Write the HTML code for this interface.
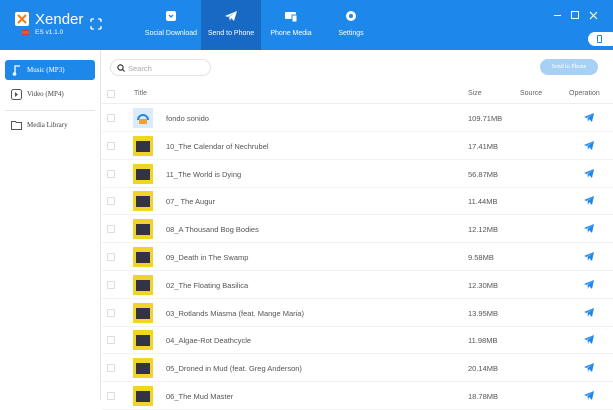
<!DOCTYPE html><html><head><style>
*{margin:0;padding:0;box-sizing:border-box}
body{width:613px;height:400px;overflow:hidden;font-family:"Liberation Sans",sans-serif;background:#fff;position:relative}
.hdr{position:absolute;left:0;top:0;width:613px;height:50px;background:#1e88ea}
.tab{position:absolute;top:0;height:50px;color:#fff;font-size:7px;text-align:center}
.tab .ic{position:absolute;top:10px;left:50%;transform:translateX(-50%)}
.tab span{position:absolute;top:30px;left:0;right:0}
.side{position:absolute;left:0;top:50px;width:101px;height:350px;border-right:1px solid #e3e3e3}
.si{position:absolute;left:5px;width:90px;height:20px;font-family:"Liberation Serif",serif;font-size:7px;color:#444;line-height:20px;padding-left:22px}
.row{position:absolute;left:102px;width:511px;height:28px;border-bottom:1px solid #f2f2f2;font-size:7.5px;color:#555}
.cb{position:absolute;left:5px;top:10px;width:8px;height:8px;border:1px solid #ddd;border-radius:1px}
.th{position:absolute;left:31px;top:4px;width:20px;height:20px;background:#f2d32a}
.t{position:absolute;left:64px;top:10px}
.s{position:absolute;left:366px;top:10px}
.op{position:absolute;left:482px;top:9px}
</style></head><body>
<div class="hdr">
 <div style="position:absolute;left:15px;top:12px;width:14px;height:14px;background:#fff;border-radius:2px"><svg width="14" height="14"><path d="M3 3L7 7L11 3M3 11L7 7L11 11" stroke="#f07a1a" stroke-width="2" fill="none"/></svg></div>
 <div style="position:absolute;left:35px;top:11px;color:#fff;font-size:15px">Xender</div>
 <div style="position:absolute;left:22px;top:30px;width:7px;height:5px;background:#c62;border-top:1px solid #d33;border-bottom:1px solid #d33"></div>
 <div style="position:absolute;left:35px;top:29px;color:#fff;font-size:6.5px">ES v1.1.0</div>
 <svg style="position:absolute;left:90px;top:18px" width="12" height="12"><path d="M1 1h3M1 1v3M11 1h-3M11 1v3M1 11h3M1 11v-3M11 11h-3M11 11v-3" stroke="#fff" stroke-width="1.3"/></svg>
 <div class="tab" style="left:141px;width:60px"><svg class="ic" width="12" height="12"><rect x="1" y="1" width="10" height="10" rx="2" fill="#fff"/><path d="M4 5l2 2 2-2" stroke="#1e88ea" stroke-width="1.3" fill="none"/></svg><span>Social Download</span></div>
 <div class="tab" style="left:201px;width:60px;background:#1769c4"><svg class="ic" width="14" height="12"><path d="M1 6L13 1L10 11L7 8L6 11L5 7L12 2L4 7Z" fill="#fff"/></svg><span>Send to Phone</span></div>
 <div class="tab" style="left:261px;width:60px"><svg class="ic" width="14" height="12"><rect x="1" y="2" width="11" height="7" rx="1" fill="#fff"/><rect x="8" y="5" width="5" height="7" fill="#fff" stroke="#1e88ea"/></svg><span>Phone Media</span></div>
 <div class="tab" style="left:321px;width:60px"><svg class="ic" width="12" height="12"><circle cx="6" cy="6" r="5" fill="#fff"/><circle cx="6" cy="6" r="2" fill="#1e88ea"/></svg><span>Settings</span></div>
 <div style="position:absolute;left:554px;top:15px;width:7px;height:1px;background:#fff"></div>
 <div style="position:absolute;left:571px;top:11px;width:8px;height:8px;border:1px solid #fff"></div>
 <svg style="position:absolute;left:589px;top:11px" width="9" height="9"><path d="M1 1l7 7M8 1l-7 7" stroke="#fff" stroke-width="1.2"/></svg>
 <div style="position:absolute;left:588px;top:32px;width:30px;height:14px;background:#fff;border-radius:7px"><div style="position:absolute;left:9px;top:3px;width:5px;height:8px;border:1.5px solid #1e88ea;border-radius:1px"></div></div>
</div>
<div class="side">
 <div class="si" style="top:10px;background:#1e88ea;color:#fff;border-radius:3px">Music (MP3)<svg style="position:absolute;left:7px;top:4px" width="10" height="12"><path d="M3 10V2h5" stroke="#fff" stroke-width="1.3" fill="none"/><circle cx="2.5" cy="10" r="1.8" fill="#fff"/></svg></div>
 <div class="si" style="top:34px">Video (MP4)<svg style="position:absolute;left:6px;top:5px" width="11" height="11"><rect x="0.5" y="0.5" width="10" height="10" rx="2" stroke="#555" fill="none"/><path d="M4 3v5l3-2.5z" fill="#555"/></svg></div>
 <div style="position:absolute;left:5px;top:60px;width:90px;height:1px;background:#e5e5e5"></div>
 <div class="si" style="top:65px">Media Library<svg style="position:absolute;left:6px;top:5px" width="11" height="10"><path d="M0.5 1.5h4l1 1h5v7h-10z" stroke="#555" fill="none"/></svg></div>
</div>
<div style="position:absolute;left:110px;top:59px;width:101px;height:17px;border:1px solid #e3e3e3;border-radius:9px;font-size:7.5px;color:#aaa;padding:4px 0 0 17px">Search<svg style="position:absolute;left:6px;top:4px" width="8" height="8"><circle cx="3.5" cy="3.5" r="2.6" stroke="#333" stroke-width="1.2" fill="none"/><path d="M5.5 5.5l2 2" stroke="#333" stroke-width="1.2"/></svg></div>
<div style="position:absolute;left:540px;top:59px;width:58px;height:16px;background:#a8d0f5;border-radius:8px;color:#fff;font-family:'Liberation Serif',serif;font-size:6px;text-align:center;line-height:16px">Send to Phone</div>
<div class="row" style="top:80px;height:24px;border-bottom:1px solid #eee;font-size:7px;color:#666"><div class="cb" style="top:10px"></div><div style="position:absolute;left:32px;top:10px">Title</div><div style="position:absolute;left:366px;top:10px">Size</div><div style="position:absolute;left:418px;top:10px">Source</div><div style="position:absolute;left:467px;top:10px">Operation</div></div>
<div id="rows"></div>
<script>
var d=[["fondo sonido","109.71MB"],["10_The Calendar of Nechrubel","17.41MB"],["11_The World is Dying","56.87MB"],["07_ The Augur","11.44MB"],["08_A Thousand Bog Bodies","12.12MB"],["09_Death in The Swamp","9.58MB"],["02_The Floating Basilica","12.30MB"],["03_Rotlands Miasma (feat. Mange Maria)","13.95MB"],["04_Algae-Rot Deathcycle","11.98MB"],["05_Droned in Mud (feat. Greg Anderson)","20.14MB"],["06_The Mud Master","18.78MB"]];
var h="";d.forEach(function(r,i){var y=104+i*27.8;var th=i==0?'<div class="th" style="background:#dcebfa"><svg width="20" height="20"><path d="M5 12a5 5 0 0 1 10 0" stroke="#1e88ea" stroke-width="2" fill="none"/><rect x="6" y="11" width="8" height="5" rx="1" fill="#f0a030"/></svg></div>':'<div class="th"><div style="position:absolute;left:3px;top:5px;width:14px;height:11px;background:#334"></div></div>';
h+='<div class="row" style="top:'+y+'px"><div class="cb"></div>'+th+'<div class="t">'+r[0]+'</div><div class="s">'+r[1]+'</div><svg class="op" width="10" height="9"><path d="M0 4L10 0L8 9L5 6L4 9L3.5 5L9 1L2.5 5Z" fill="#1e88ea"/></svg></div>';});
document.getElementById("rows").innerHTML=h;
</script>
</body></html>
